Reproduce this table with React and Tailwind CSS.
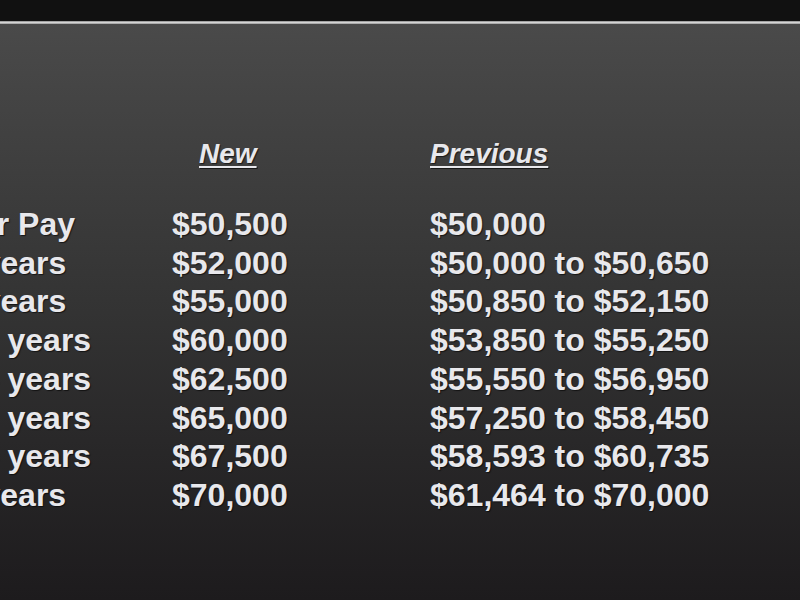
import React from "react";

const rows = [
  { label: "Starter Pay", shift: "-ml-[94px]", now: "$50,500", before: "$50,000" },
  { label: "2 years", shift: "-ml-[44px]", now: "$52,000", before: "$50,000 to $50,650" },
  { label: "5 years", shift: "-ml-[44px]", now: "$55,000", before: "$50,850 to $52,150" },
  { label: "10 years", shift: "-ml-[37px]", now: "$60,000", before: "$53,850 to $55,250" },
  { label: "15 years", shift: "-ml-[37px]", now: "$62,500", before: "$55,550 to $56,950" },
  { label: "20 years", shift: "-ml-[37px]", now: "$65,000", before: "$57,250 to $58,450" },
  { label: "25 years", shift: "-ml-[37px]", now: "$67,500", before: "$58,593 to $60,735" },
  { label: "30 years", shift: "-ml-[62px]", now: "$70,000", before: "$61,464 to $70,000" },
];

const App = () => {
  return (
    <div className="w-[800px] h-[600px] flex flex-col overflow-hidden bg-[#111111] font-['Liberation_Sans',Arial,sans-serif] font-bold text-[#e8e8ec] [text-shadow:1px_1px_1px_rgba(0,0,0,0.6)]">
      {/* top bar */}
      <div className="h-[21px] bg-[#111111]"></div>
      <div className="h-[3px] bg-gradient-to-b from-[#8a8a8a] via-[#d4d4d4] to-[#9a9a9a]"></div>

      {/* slide */}
      <div className="flex-1 bg-gradient-to-b from-[#4a4a4a] via-[#333333] to-[#1d1b1d] pt-[114px]">
        <div className="grid grid-cols-[172px_258px_1fr] text-[28px] leading-[32px] italic">
          <div></div>
          <div className="pl-[27px]">
            <span className="underline decoration-2 underline-offset-[3px]">New</span>
          </div>
          <div>
            <span className="underline decoration-2 underline-offset-[3px]">Previous</span>
          </div>
        </div>

        <div className="mt-[35px] flex flex-col text-[32px] leading-[38.7px]">
          {rows.map((row, i) => (
            <div key={i} className="grid grid-cols-[172px_258px_1fr]">
              <div className="overflow-hidden whitespace-nowrap">
                <div className={row.shift}>{row.label}</div>
              </div>
              <div className="whitespace-nowrap">{row.now}</div>
              <div className="whitespace-nowrap">{row.before}</div>
            </div>
          ))}
        </div>
      </div>
    </div>
  );
};

export default App;
